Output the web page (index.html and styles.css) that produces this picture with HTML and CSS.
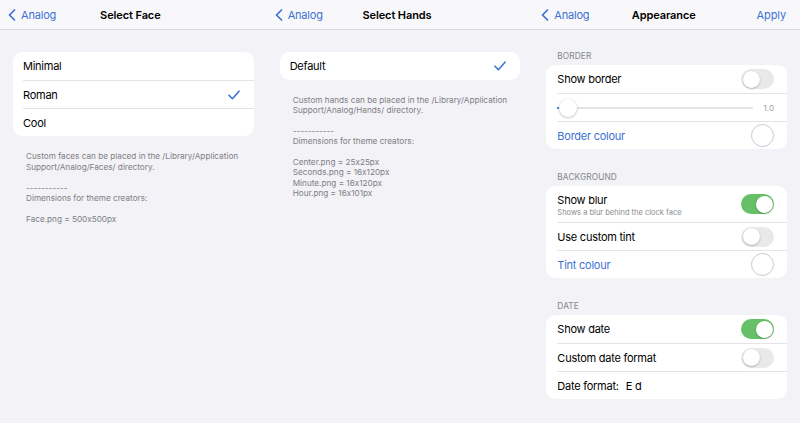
FILE: index.html
```html
<!DOCTYPE html>
<html lang="en">
<head>
<meta charset="utf-8">
<title>Analog settings</title>
<link rel="stylesheet" href="styles.css">
</head>
<body>
<div class="screen">

  <section class="pane">
    <header class="nav">
      <a class="back"><svg class="chev" viewBox="0 0 8 12" width="8" height="12"><path d="M6.5 1 L1.5 6 L6.5 11" fill="none" stroke="currentColor" stroke-width="1.7" stroke-linecap="round" stroke-linejoin="round"/></svg>Analog</a>
      <h1 class="title">Select Face</h1>
      <span class="action"></span>
    </header>
    <div class="content">
      <div class="card">
        <div class="row"><div class="inner"><span class="label">Minimal</span></div></div>
        <div class="row"><div class="inner"><span class="label">Roman</span><svg class="check" viewBox="0 0 12 10" width="12" height="10"><path d="M1 5.2 L4.4 8.7 L11 1.2" fill="none" stroke="currentColor" stroke-width="1.6" stroke-linecap="round" stroke-linejoin="round"/></svg></div></div>
        <div class="row"><div class="inner"><span class="label">Cool</span></div></div>
      </div>
      <p class="footer">Custom faces can be placed in the /Library/Application Support/Analog/Faces/ directory.<br><br>-----------<br>Dimensions for theme creators:<br><br>Face.png = 500x500px</p>
    </div>
  </section>

  <section class="pane">
    <header class="nav">
      <a class="back"><svg class="chev" viewBox="0 0 8 12" width="8" height="12"><path d="M6.5 1 L1.5 6 L6.5 11" fill="none" stroke="currentColor" stroke-width="1.7" stroke-linecap="round" stroke-linejoin="round"/></svg>Analog</a>
      <h1 class="title">Select Hands</h1>
      <span class="action"></span>
    </header>
    <div class="content">
      <div class="card">
        <div class="row"><div class="inner"><span class="label">Default</span><svg class="check" viewBox="0 0 12 10" width="12" height="10"><path d="M1 5.2 L4.4 8.7 L11 1.2" fill="none" stroke="currentColor" stroke-width="1.6" stroke-linecap="round" stroke-linejoin="round"/></svg></div></div>
      </div>
      <p class="footer footer-tight">Custom hands can be placed in the /Library/Application Support/Analog/Hands/ directory.<br><br>-----------<br>Dimensions for theme creators:<br><br>Center.png = 25x25px<br>Seconds.png = 16x120px<br>Minute.png = 16x120px<br>Hour.png = 16x101px</p>
    </div>
  </section>

  <section class="pane">
    <header class="nav">
      <a class="back"><svg class="chev" viewBox="0 0 8 12" width="8" height="12"><path d="M6.5 1 L1.5 6 L6.5 11" fill="none" stroke="currentColor" stroke-width="1.7" stroke-linecap="round" stroke-linejoin="round"/></svg>Analog</a>
      <h1 class="title">Appearance</h1>
      <span class="action"><a class="apply">Apply</a></span>
    </header>
    <div class="content content-groups">
      <div class="group">
        <div class="group-head">BORDER</div>
        <div class="card card-wide">
          <div class="row"><div class="inner"><span class="label">Show border</span><span class="toggle"></span></div></div>
          <div class="row"><div class="inner">
            <div class="slider"><span class="min"></span><span class="track"></span><span class="thumb"></span></div>
            <span class="slider-val">1.0</span>
          </div></div>
          <div class="row"><div class="inner"><span class="label link">Border colour</span><span class="swatch"></span></div></div>
        </div>
      </div>
      <div class="group">
        <div class="group-head">BACKGROUND</div>
        <div class="card card-wide">
          <div class="row"><div class="inner inner-tall"><span class="label-stack"><span class="label">Show blur</span><span class="sub">Shows a blur behind the clock face</span></span><span class="toggle on"></span></div></div>
          <div class="row"><div class="inner"><span class="label">Use custom tint</span><span class="toggle"></span></div></div>
          <div class="row"><div class="inner"><span class="label link">Tint colour</span><span class="swatch"></span></div></div>
        </div>
      </div>
      <div class="group">
        <div class="group-head">DATE</div>
        <div class="card card-wide">
          <div class="row"><div class="inner"><span class="label">Show date</span><span class="toggle on"></span></div></div>
          <div class="row"><div class="inner"><span class="label">Custom date format</span><span class="toggle"></span></div></div>
          <div class="row"><div class="inner inner-left"><span class="label">Date format:</span><span class="label value">E d</span></div></div>
        </div>
      </div>
    </div>
  </section>

</div>
</body>
</html>
```

FILE: styles.css
```css
* { box-sizing: border-box; }

html, body {
  margin: 0;
  padding: 0;
  background: #f2f2f7;
}

body {
  width: 800px;
  height: 423px;
  overflow: hidden;
  font-family: Inter, "Noto Sans", "Liberation Sans", sans-serif;
  font-feature-settings: "calt" 0;
  color: #000;
  -webkit-font-smoothing: antialiased;
}

.screen {
  display: flex;
  height: 423px;
}

.pane {
  flex: 1 1 0;
  min-width: 0;
  display: flex;
  flex-direction: column;
}

/* Navigation bar */
.nav {
  height: 30px;
  background: #f8f8fa;
  border-bottom: 1px solid #d9d9dd;
  display: grid;
  grid-template-columns: 1fr auto 1fr;
  align-items: center;
  padding: 0 14px 0 8px;
}

.back {
  display: flex;
  align-items: center;
  gap: 5px;
  color: #3d72d4;
  font-size: 11px;
  letter-spacing: -0.2px;
}

.chev { display: block; }

.title {
  margin: 0;
  font-size: 11px;
  font-weight: 600;
  letter-spacing: -0.1px;
  text-align: center;
}

.action {
  display: flex;
  justify-content: flex-end;
}

.apply {
  color: #3d72d4;
  font-size: 11px;
  letter-spacing: -0.1px;
}

/* Content */
.content {
  padding: 22px 13px 0 13px;
}

.content-groups {
  padding-top: 20px;
  display: flex;
  flex-direction: column;
  gap: 22px;
}

.card {
  background: #fff;
  border-radius: 9px;
  overflow: hidden;
}

.row {
  padding-left: 10px;
}

.card-wide .row {
  padding-left: 11px;
}

.row + .row .inner {
  border-top: 1px solid #e4e4e8;
}

.inner {
  height: 28px;
  display: flex;
  align-items: center;
  justify-content: space-between;
  padding-right: 14px;
}

.card-wide .inner {
  padding-right: 13px;
}

.inner-tall {
  height: 36px;
}

.inner-left {
  justify-content: flex-start;
}

.label {
  font-size: 11px;
  letter-spacing: -0.25px;
  line-height: 14px;
}

.link { color: #3d72d4; }

.value { margin-left: 7px; }

.label-stack {
  display: flex;
  flex-direction: column;
  gap: 1px;
  padding-top: 1px;
}

.sub {
  font-size: 7.5px;
  color: #8a8a8e;
  line-height: 9px;
}

.check {
  color: #3d72d4;
  display: block;
}

/* Footer text */
.footer {
  margin: 15px -13px 0 0;
  padding: 0 0 0 13px;
  font-size: 8.2px;
  line-height: 10.5px;
  color: #808085;
  letter-spacing: 0;
}

.footer-tight {
  margin-top: 15px;
  line-height: 10.35px;
}

/* Group header */
.group-head {
  padding-left: 11px;
  font-size: 8.3px;
  line-height: 12px;
  margin-bottom: 3px;
  color: #85858a;
  letter-spacing: 0.1px;
}

/* Toggle */
.toggle {
  position: relative;
  width: 33px;
  height: 20px;
  border-radius: 10px;
  background: #e9e9eb;
  flex: none;
}

.toggle::after {
  content: "";
  position: absolute;
  top: 1.5px;
  left: 1.5px;
  width: 17px;
  height: 17px;
  border-radius: 50%;
  background: #fff;
  box-shadow: 0 1px 2px rgba(0, 0, 0, 0.22), 0 0 0 0.5px rgba(0, 0, 0, 0.05);
}

.toggle.on {
  background: #66c067;
}

.toggle.on::after {
  left: 14.5px;
}

/* Colour swatch */
.swatch {
  width: 23px;
  height: 23px;
  border-radius: 50%;
  border: 1px solid #c9c9ce;
  background: #fff;
  flex: none;
}

/* Slider */
.slider {
  position: relative;
  flex: 1;
  height: 20px;
  margin-right: 5px;
}

.slider .track {
  position: absolute;
  left: 0;
  right: 0;
  top: 9px;
  height: 2px;
  border-radius: 1px;
  background: #e3e3e7;
}

.slider .min {
  position: absolute;
  left: 0;
  top: 9px;
  width: 3px;
  height: 2px;
  border-radius: 1px;
  background: #3d72d4;
  z-index: 1;
}

.slider .thumb {
  position: absolute;
  left: 2px;
  top: 1px;
  width: 18px;
  height: 18px;
  border-radius: 50%;
  background: #fff;
  box-shadow: 0 1px 3px rgba(0, 0, 0, 0.2), 0 0 0 0.5px rgba(0, 0, 0, 0.06);
  z-index: 2;
}

.slider-val {
  font-size: 8px;
  color: #a0a0a5;
  width: 16px;
  text-align: right;
  flex: none;
}
```
